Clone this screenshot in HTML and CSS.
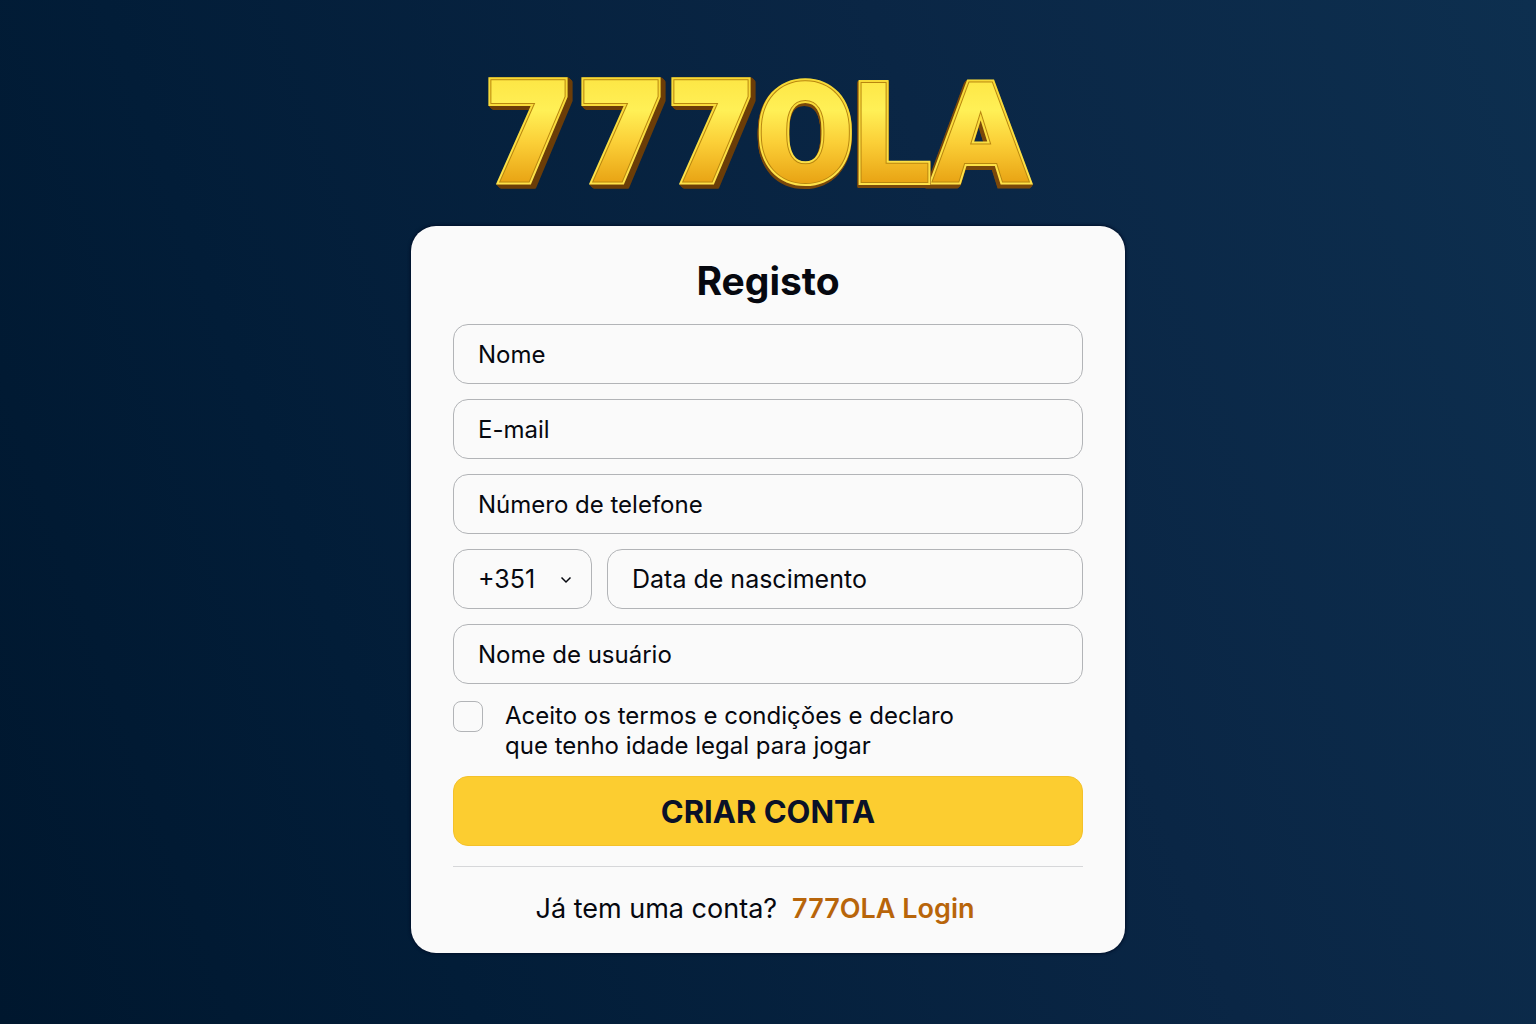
FILE: index.html
```html
<!DOCTYPE html>
<html lang="pt">
<head>
    <title>777OLA - Registo</title>
    <meta charset="UTF-8">
    <meta name="viewport" content="width=device-width, initial-scale=1">
    <link rel="stylesheet" href="styles.css">
</head>
<body>
    <!-- Logo -->
    <svg class="logo" viewBox="468 70 600 130" role="img" aria-label="777OLA">
        <defs>
            <linearGradient id="gold" gradientUnits="userSpaceOnUse" x1="0" y1="78" x2="0" y2="186">
                <stop offset="0" stop-color="#fde645"/>
                <stop offset="0.3" stop-color="#fff056"/>
                <stop offset="0.6" stop-color="#fbcf37"/>
                <stop offset="1" stop-color="#e7a011"/>
            </linearGradient>
            <linearGradient id="edge" gradientUnits="userSpaceOnUse" x1="0" y1="78" x2="0" y2="190">
                <stop offset="0" stop-color="#f6d936"/>
                <stop offset="1" stop-color="#ffe24a"/>
            </linearGradient>
        </defs>
        <g class="letters depth-right">
            <g class="rim"><text id="sevens" class="sevens" x="486 579 669" y="182">777</text></g>
            <use href="#sevens" class="groove"/>
            <use href="#sevens" class="face"/>
        </g>
        <g class="letters depth-left">
            <g class="rim"><text id="letter-a" x="933" y="182">A</text></g>
            <use href="#letter-a" class="groove"/>
            <use href="#letter-a" class="face"/>
        </g>
        <g class="letters depth-down">
            <g class="rim"><text id="letters-ol" x="757 854" y="182">OL</text></g>
            <use href="#letters-ol" class="groove"/>
            <use href="#letters-ol" class="face"/>
        </g>
    </svg>

    <!-- Registration form -->
    <main class="card">
        <h1>Registo</h1>
        <form class="register-form">
            <input class="field" type="text" name="nome" placeholder="Nome" aria-label="Nome">
            <input class="field" type="email" name="email" placeholder="E-mail" aria-label="E-mail">
            <input class="field" type="tel" name="telefone" placeholder="Número de telefone" aria-label="Número de telefone">
            <div class="field-row">
                <div class="select-wrap">
                    <select class="field field-large" name="indicativo" aria-label="Indicativo">
                        <option>+351</option>
                    </select>
                    <svg class="chevron" viewBox="0 0 12 8" aria-hidden="true">
                        <path d="M1.5 1.5 L6 6 L10.5 1.5"/>
                    </svg>
                </div>
                <input class="field field-large" type="text" name="nascimento" placeholder="Data de nascimento" aria-label="Data de nascimento">
            </div>
            <input class="field" type="text" name="usuario" placeholder="Nome de usuário" aria-label="Nome de usuário">
            <div class="terms">
                <input class="checkbox" type="checkbox" id="termos" name="termos">
                <label for="termos">Aceito os termos e condiçǒes e declaro que tenho idade legal para jogar</label>
            </div>
            <button type="submit" class="submit-button">CRIAR CONTA</button>
        </form>
        <p class="login">
            <span>Já tem uma conta?</span>
            <a href="#login">777OLA Login</a>
        </p>
    </main>
</body>
</html>
```
FILE: styles.css
```css
* {
    box-sizing: border-box;
}
body {
    margin: 0;
    min-height: 100vh;
    padding: 70px 16px 24px;
    display: flex;
    flex-direction: column;
    align-items: center;
    font-family: Inter, "Liberation Sans", sans-serif;
    font-size: 24px;
    color: #06080f;
    background: linear-gradient(70deg, #00172e 0%, #021d38 25%, #0a2645 65%, #0d2f4f 100%);
}

/* Logo */
.logo {
    width: 100%;
    max-width: 600px;
    flex: none;
    overflow: visible;
}
.letters {
    font-family: Roboto, sans-serif;
    font-size: 140px;
    font-weight: 900;
    stroke-linejoin: miter;
}
.sevens {
    font-family: "Open Sans", sans-serif;
    font-size: 142px;
}
.rim {
    fill: url(#edge);
    stroke: url(#edge);
    stroke-width: 6px;
}
.groove {
    fill: #b8860f;
    stroke: #b8860f;
    stroke-width: 2px;
}
.face {
    fill: url(#gold);
    stroke: none;
}
/* 1px steps add up to a solid side */
.depth-right {
    filter: drop-shadow(1px 1px 0 #6b3d08) drop-shadow(1px 1px 0 #6b3d08) drop-shadow(1px 1px 0 #6b3d08) drop-shadow(1px 1px 0 #6b3d08) drop-shadow(1px 0 0 #6b3d08);
}
.depth-left {
    filter: drop-shadow(-1px 1px 0 #7a480a) drop-shadow(-1px 1px 0 #7a480a) drop-shadow(-1px 1px 0 #7a480a) drop-shadow(0 1px 0 #7a480a);
}
.depth-down {
    filter: drop-shadow(0 1px 0 #7a480a) drop-shadow(-1px 1px 0 #7a480a) drop-shadow(0 1px 0 #7a480a);
}

/* Card */
.card {
    width: 100%;
    max-width: 714px;
    margin-top: 26px;
    padding: 30px 42px 26px;
    border-radius: 25px;
    background: #fafafa;
    box-shadow: 0 0 3px 1px #00102a;
}
h1 {
    margin: 0 0 18px;
    font-size: 39px;
    line-height: 50px;
    text-align: center;
}
.register-form {
    display: flex;
    flex-direction: column;
    gap: 15px;
}
.field {
    display: block;
    width: 100%;
    height: 60px;
    margin: 0;
    padding: 0 24px;
    border: 1px solid #b2b4b7;
    border-radius: 15px;
    background: transparent;
    color: inherit;
    font: inherit;
    appearance: none;
}
.field::placeholder {
    color: inherit;
    opacity: 1;
}
.field-large {
    font-size: 25px;
}
.field-row {
    display: flex;
    gap: 15px;
}
.select-wrap {
    position: relative;
    flex: none;
    width: 139px;
}
.chevron {
    position: absolute;
    top: 27px;
    right: 20px;
    width: 12px;
    height: 8px;
    fill: none;
    stroke: #06080f;
    stroke-width: 1.5;
    pointer-events: none;
}
.terms {
    display: flex;
    gap: 22px;
    padding-top: 2px;
}
.terms label {
    max-width: 480px;
    line-height: 30px;
}
.checkbox {
    appearance: none;
    flex: none;
    width: 30px;
    height: 31px;
    margin: 0;
    border: 1px solid #b2b4b7;
    border-radius: 8px;
}
.checkbox:checked {
    background: #fccd30;
}
.submit-button {
    height: 70px;
    border: 1px solid #f4c12a;
    border-radius: 15px;
    background: #fccd30;
    color: #0a1128;
    font: inherit;
    font-size: 31px;
    font-weight: 700;
    cursor: pointer;
}
.login {
    display: flex;
    flex-wrap: wrap;
    justify-content: center;
    gap: 15px;
    margin: 20px 0 0;
    padding: 24px 26px 0 0;
    border-top: 1px solid #d6d7d9;
    font-size: 27px;
    line-height: 36px;
}
.login a {
    color: #b8650a;
    font-weight: 600;
    text-decoration: none;
}
```
